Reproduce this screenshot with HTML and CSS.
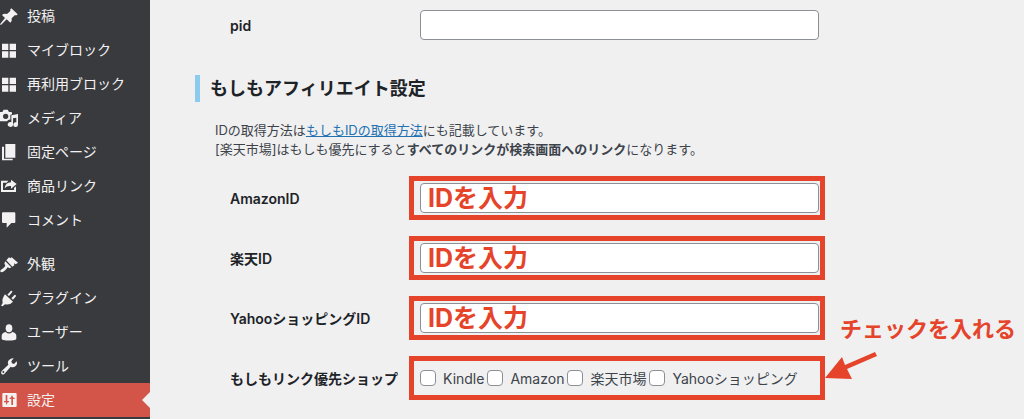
FILE: index.html
```html
<!DOCTYPE html>
<html lang="ja">
<head>
  <meta charset="UTF-8" />
  <meta name="viewport" content="width=device-width, initial-scale=1.0" />
  <title>もしもアフィリエイト設定</title>
  <link rel="stylesheet" href="styles.css">
</head>
<body>
  <nav class="sidebar">
    <a class="menu-item" href="#">
      <svg class="icon" viewBox="0 0 54 54"><path d="M34 4L53 22Q49 27 45 24L35 34Q37 42 31 47L20 37L3 54L0 52L15 33L6 24Q12 18 21 21L31 12Q29 8 34 4Z"/></svg>
      投稿
    </a>
    <a class="menu-item" href="#">
      <svg class="icon" viewBox="0 0 54 54"><path d="M6 8h19v19H6zM29 8h19v19H29zM6 31h19v19H6zM29 31h19v19H29z"/></svg>
      マイブロック
    </a>
    <a class="menu-item" href="#">
      <svg class="icon" viewBox="0 0 54 54"><path d="M6 8h19v19H6zM29 8h19v19H29zM6 31h19v19H6zM29 31h19v19H29z"/></svg>
      再利用ブロック
    </a>
    <a class="menu-item" href="#">
      <svg class="icon" viewBox="0 0 54 54"><path fill-rule="evenodd" d="M0 9h7l4-7h12l4 7h6q3 0 3 3v4l-5 2v14q-6-1-10 5H0zM17 14a8 8 0 1 0 0 16a8 8 0 1 0 0-16z"/><path d="M34 19L54 15V47a7 7 0 1 1-5-7V26l-10 2V48a8 7 0 1 1-5-8z"/></svg>
      メディア
    </a>
    <a class="menu-item" href="#">
      <svg class="icon" viewBox="0 0 54 54"><path d="M16 3h30v41H16zM6 11h6v36h26v5H6z"/></svg>
      固定ページ
    </a>
    <a class="menu-item" href="#">
      <svg class="icon" viewBox="0 0 54 54"><path d="M3 11H25L20 17H9V39H42V33L48 28V45H3zM33 8L50 21L33 35V27Q21 25 14 34Q16 16 33 16z"/></svg>
      商品リンク
    </a>
    <a class="menu-item" href="#">
      <svg class="icon" viewBox="0 0 54 54"><path d="M9 4H43Q46 4 46 7V33Q46 36 43 36H34L20 50V36H9Q6 36 6 33V7Q6 4 9 4z"/></svg>
      コメント
    </a>
    <a class="menu-item group-start" href="#">
      <svg class="icon" viewBox="0 0 54 54"><path d="M19 16L27 7Q31 12 35 7L54 23L47 28L42 25L43 31L37 35zM16 19L34 37L29 40L23 37Q14 51 5 52Q-1 51 2 45Q11 40 16 33L13 25z"/></svg>
      外観
    </a>
    <a class="menu-item" href="#">
      <svg class="icon" viewBox="0 0 54 54"><path d="M15 16L39 38Q30 49 15 46L8 52L3 50L8 42Q5 29 15 16zM22 17L33 5Q38 5 37 9L27 21zM34 28L44 17Q49 17 48 22L39 32z"/></svg>
      プラグイン
    </a>
    <a class="menu-item" href="#">
      <svg class="icon" viewBox="0 0 54 54"><ellipse cx="27" cy="16" rx="10" ry="12"/><path d="M17 27Q27 36 37 27Q49 30 49 38V47Q49 50 44 51Q27 54 10 51Q5 50 5 47V38Q5 30 17 27z"/></svg>
      ユーザー
    </a>
    <a class="menu-item" href="#">
      <svg class="icon" viewBox="0 0 54 54"><path fill-rule="evenodd" d="M41 4L34 13L36 19L42 21L50 13Q53 22 47 27Q40 33 32 29L15 49Q10 55 5 51Q1 46 6 41L25 23Q21 14 28 8Q34 2 41 4zM10 42a3 3 0 1 0 0 6a3 3 0 1 0 0-6z"/></svg>
      ツール
    </a>
    <a class="menu-item current" href="#">
      <svg class="icon" viewBox="0 0 54 54"><path fill-rule="evenodd" d="M10 6H47Q50 6 50 9V45Q50 48 47 48H10Q7 48 7 45V9Q7 6 10 6zM17 12V30H12V34H17L20 42L23 34H27V30H22V12zM36 12L32 20H29V24H34V42H39V24H44V20H40z"/></svg>
      設定
    </a>
  </nav>

  <main class="content">
    <div class="form-row pid-row">
      <label class="label" for="pid">pid</label>
      <div class="field"><input class="text-input" id="pid" type="text"></div>
    </div>

    <h2 class="section-title">もしもアフィリエイト設定</h2>
    <p class="description">
      IDの取得方法は<a href="#">もしもIDの取得方法</a>にも記載しています。<br>
      [楽天市場]はもしも優先にすると<strong>すべてのリンクが検索画面へのリンク</strong>になります。
    </p>

    <div class="form-row">
      <label class="label" for="amazon">AmazonID</label>
      <div class="field marked"><input class="text-input" id="amazon" type="text" value="IDを入力"></div>
    </div>
    <div class="form-row">
      <label class="label" for="rakuten">楽天ID</label>
      <div class="field marked"><input class="text-input" id="rakuten" type="text" value="IDを入力"></div>
    </div>
    <div class="form-row">
      <label class="label" for="yahoo">YahooショッピングID</label>
      <div class="field marked"><input class="text-input" id="yahoo" type="text" value="IDを入力"></div>
    </div>
    <div class="form-row">
      <span class="label" id="shops">もしもリンク優先ショップ</span>
      <div class="field marked checks" role="group" aria-labelledby="shops">
        <label class="check"><input type="checkbox">Kindle</label>
        <label class="check"><input type="checkbox">Amazon</label>
        <label class="check"><input type="checkbox">楽天市場</label>
        <label class="check"><input type="checkbox">Yahooショッピング</label>
        <div class="note">
          チェックを入れる
          <svg class="arrow" viewBox="0 0 52 28"><path d="M0 26L17 5L20 13L50 0L52 4L22 17L27 27z"/></svg>
        </div>
      </div>
    </div>
  </main>
</body>
</html>
```

FILE: styles.css
```css
* {
  box-sizing: border-box;
}

body {
  display: flex;
  min-height: 100vh;
  margin: 0;
  overflow: hidden;
  background-color: #f0f0f1;
  color: #3c434a;
  font-family: Inter, "Noto Sans CJK JP", sans-serif;
  font-size: 14px;
}

/* Sidebar */
.sidebar {
  width: 150px;
  flex-shrink: 0;
  margin-top: -1px;
  background-color: #383a3e;
}

.menu-item {
  position: relative;
  display: flex;
  align-items: center;
  gap: 9px;
  height: 34px;
  color: #f3f1f1;
  line-height: 20px;
  text-decoration: none;
}

.group-start {
  margin-top: 10px;
}

.icon {
  width: 18px;
  height: 18px;
  flex-shrink: 0;
  fill: #f3f1f1;
}

.current {
  background-color: #d35448;
}

.current::after {
  content: "";
  position: absolute;
  right: 0;
  border: 8px solid transparent;
  border-left-width: 0;
  border-right-color: #f0f0f1;
}

/* Settings form */
.content {
  flex: 1;
  padding: 0 20px 0 45px;
}

.form-row {
  display: flex;
  align-items: center;
  height: 60px;
  padding-left: 35px;
}

.pid-row {
  height: 50px;
}

.label {
  width: 179px;
  flex-shrink: 0;
  color: #1d2327;
  font-weight: 600;
}

.field {
  flex: 0 1 416px;
  padding: 0 6px 0 11px;
}

.text-input {
  display: block;
  width: 100%;
  height: 30px;
  padding: 0 7px 4px;
  border: 1px solid #8c8f94;
  border-radius: 4px;
  background-color: #fff;
  color: #e5432a;
  font-family: inherit;
  font-size: 25px;
  font-weight: 700;
}

.marked {
  position: relative;
  height: 44px;
  padding: 2px 1px 2px 6px;
  border: 5px solid #e5432a;
}

.section-title {
  margin: 25px 0 19px;
  padding-left: 10px;
  border-left: 5px solid #8dcbee;
  color: #1d2327;
  font-size: 18px;
  line-height: 27px;
}

.description {
  margin: 0 0 9px 20px;
  font-size: 13px;
  line-height: 19px;
}

.description a {
  color: #2271b1;
}

.checks {
  display: flex;
  align-items: center;
  gap: 3px;
}

.check {
  display: flex;
  align-items: center;
  gap: 7px;
  white-space: nowrap;
}

.check input {
  appearance: none;
  width: 16px;
  height: 16px;
  margin: 0;
  border: 1px solid #8c8f94;
  border-radius: 4px;
  background-color: #fff;
}

/* Callout beside the shop list */
.note {
  position: absolute;
  bottom: 15px;
  left: 100%;
  padding-left: 20px;
  color: #e5432a;
  font-size: 22px;
  font-weight: 700;
  line-height: 30px;
  white-space: nowrap;
}

.arrow {
  display: block;
  width: 52px;
  height: 28px;
  margin: 8px 0 0 -15px;
  fill: #e5432a;
}
```
